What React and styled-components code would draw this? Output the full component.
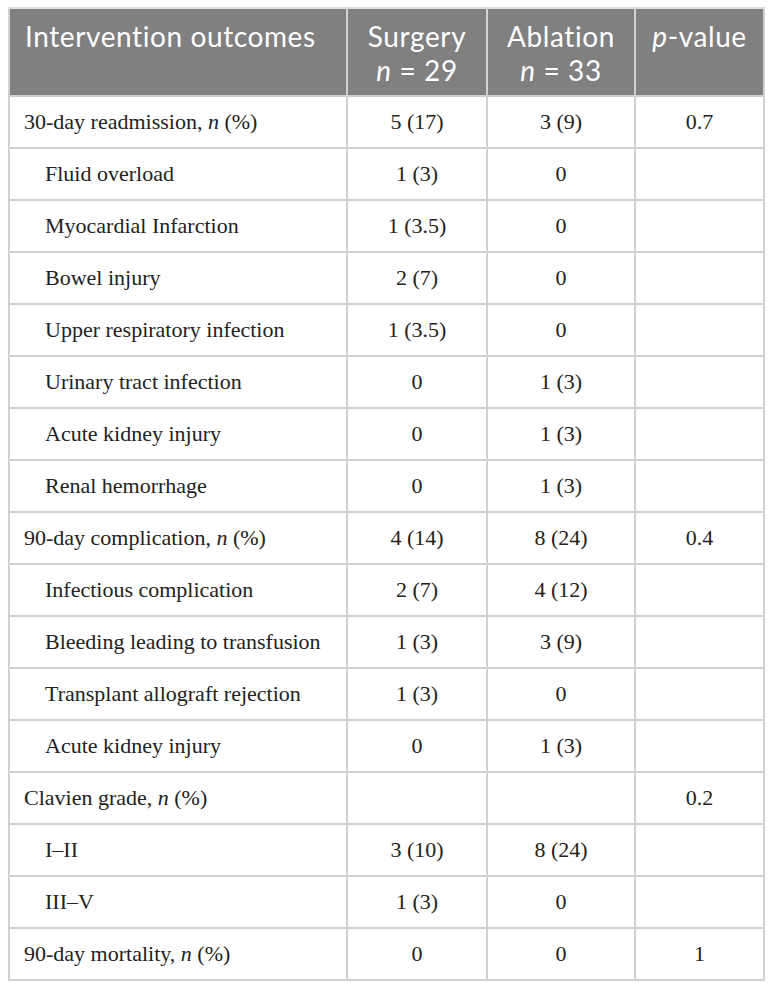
import styled, { createGlobalStyle } from "styled-components";

const GlobalStyle = createGlobalStyle`
    body {
        margin: 0;
        background: #ffffff;
    }
`;

const Page = styled.div`
    padding: 7px 9px 0 8px;
`;

const Table = styled.table`
    width: 755px;
    border-collapse: collapse;
    table-layout: fixed;
    font-family: "Liberation Serif", "Times New Roman", serif;
    color: #222;
`;

const HeadCell = styled.th`
    background-color: #808080;
    color: #ffffff;
    font-family: Lato, "Open Sans", sans-serif;
    font-weight: 400;
    font-size: 28px;
    letter-spacing: 0.6px;
    line-height: 34px;
    text-align: ${({ $left }) => ($left ? "left" : "center")};
    vertical-align: top;
    height: 88px;
    box-sizing: border-box;
    padding: ${({ $left }) => ($left ? "10px 6px 0 15px" : "10px 4px 0")};
    border: 2px solid #d2d2d2;
    border-top-color: #e0e0e0;
    border-bottom: 2px solid #cfcfcf;
    white-space: nowrap;
    em {
        font-style: italic;
    }
`;

const Cell = styled.td`
    height: 52px;
    box-sizing: border-box;
    border: 2px solid #d2d2d2;
    font-size: 22px;
    line-height: 26px;
    vertical-align: middle;
    text-align: ${({ $label }) => ($label ? "left" : "center")};
    padding: ${({ $label, $sub }) =>
        $label ? ($sub ? "0 6px 0 35px" : "0 6px 0 14px") : "0 4px"};
    white-space: nowrap;
`;

const rows = [
    ["30-day readmission, ", true, false, "5 (17)", "3 (9)", "0.7"],
    ["Fluid overload", false, true, "1 (3)", "0", ""],
    ["Myocardial Infarction", false, true, "1 (3.5)", "0", ""],
    ["Bowel injury", false, true, "2 (7)", "0", ""],
    ["Upper respiratory infection", false, true, "1 (3.5)", "0", ""],
    ["Urinary tract infection", false, true, "0", "1 (3)", ""],
    ["Acute kidney injury", false, true, "0", "1 (3)", ""],
    ["Renal hemorrhage", false, true, "0", "1 (3)", ""],
    ["90-day complication, ", true, false, "4 (14)", "8 (24)", "0.4"],
    ["Infectious complication", false, true, "2 (7)", "4 (12)", ""],
    ["Bleeding leading to transfusion", false, true, "1 (3)", "3 (9)", ""],
    ["Transplant allograft rejection", false, true, "1 (3)", "0", ""],
    ["Acute kidney injury", false, true, "0", "1 (3)", ""],
    ["Clavien grade, ", true, false, "", "", "0.2"],
    ["I\u2013II", false, true, "3 (10)", "8 (24)", ""],
    ["III\u2013V", false, true, "1 (3)", "0", ""],
    ["90-day mortality, ", true, false, "0", "0", "1"],
];

export default function App() {
    return (
        <Page>
            <GlobalStyle />
            <Table>
                <colgroup>
                    <col style={{ width: 338 }} />
                    <col style={{ width: 140 }} />
                    <col style={{ width: 148 }} />
                    <col style={{ width: 129 }} />
                </colgroup>
                <thead>
                    <tr>
                        <HeadCell $left>Intervention outcomes</HeadCell>
                        <HeadCell>
                            Surgery
                            <br />
                            <em>n</em> = 29
                        </HeadCell>
                        <HeadCell>
                            Ablation
                            <br />
                            <em>n</em> = 33
                        </HeadCell>
                        <HeadCell>
                            <em>p</em>-value
                        </HeadCell>
                    </tr>
                </thead>
                <tbody>
                    {rows.map(([label, hasN, sub, a, b, p], i) => (
                        <tr key={i}>
                            <Cell $label $sub={sub}>
                                {label}
                                {hasN && (
                                    <>
                                        <i>n</i> (%)
                                    </>
                                )}
                            </Cell>
                            <Cell>{a}</Cell>
                            <Cell>{b}</Cell>
                            <Cell>{p}</Cell>
                        </tr>
                    ))}
                </tbody>
            </Table>
        </Page>
    );
}
